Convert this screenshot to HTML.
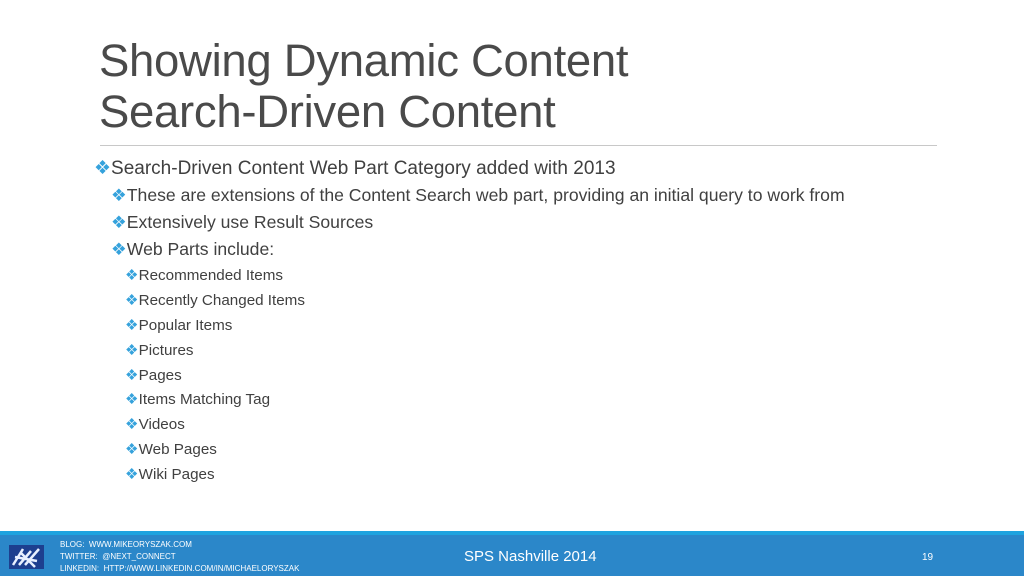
<!DOCTYPE html>
<html><head><style>
body{margin:0;width:1024px;height:576px;background:#fff;position:relative;overflow:hidden;font-family:"Liberation Sans",sans-serif;color:#404040}
.t{position:absolute;left:99px;top:35px;font-size:45.5px;line-height:51px;color:#4a4a4a;letter-spacing:-0.3px}
.rule{position:absolute;left:100px;top:145px;width:837px;height:1px;background:#c8c8c8}
.l{position:absolute;white-space:nowrap}
.b{color:#35a2dc}
.l1{left:94px;font-size:19px}
.l2{left:111px;font-size:17.6px}
.l3{left:125px;font-size:15.2px}
.ft{position:absolute;left:0;top:531px;width:1024px;height:45px;background:#2b87c9;border-top:4px solid #1fa3df;box-sizing:border-box}
.s{position:absolute;color:#fff;font-size:8px;left:60px;white-space:nowrap}
</style></head><body>
<div class="t">Showing Dynamic Content<br>Search-Driven Content</div>
<div class="rule"></div>
<div class="l l1" style="top:157px"><span class="b">❖</span>Search-Driven Content Web Part Category added with 2013</div>
<div class="l l2" style="top:185px"><span class="b">❖</span>These are extensions of the Content Search web part, providing an initial query to work from</div>
<div class="l l2" style="top:212px"><span class="b">❖</span>Extensively use Result Sources</div>
<div class="l l2" style="top:239px"><span class="b">❖</span>Web Parts include:</div>
<div class="l l3" style="top:266px"><span class="b">❖</span>Recommended Items</div>
<div class="l l3" style="top:291px"><span class="b">❖</span>Recently Changed Items</div>
<div class="l l3" style="top:316px"><span class="b">❖</span>Popular Items</div>
<div class="l l3" style="top:341px"><span class="b">❖</span>Pictures</div>
<div class="l l3" style="top:366px"><span class="b">❖</span>Pages</div>
<div class="l l3" style="top:390px"><span class="b">❖</span>Items Matching Tag</div>
<div class="l l3" style="top:415px"><span class="b">❖</span>Videos</div>
<div class="l l3" style="top:440px"><span class="b">❖</span>Web Pages</div>
<div class="l l3" style="top:465px"><span class="b">❖</span>Wiki Pages</div>
<div class="ft"></div>
<svg style="position:absolute;left:9px;top:545px" width="35" height="24" viewBox="0 0 35 24">
<rect width="35" height="24" fill="#1d3f8f"/>
<path d="M4 20 L14 4 M10 20 L22 6 M16 20 L30 4 M6 12 L28 16 M12 8 L26 22" stroke="#e8f0ff" stroke-width="2.5"/>
</svg>
<div class="s" style="top:540px">BLOG:&nbsp; WWW.MIKEORYSZAK.COM</div>
<div class="s" style="top:552px">TWITTER:&nbsp; @NEXT_CONNECT</div>
<div class="s" style="top:564px">LINKEDIN:&nbsp; HTTP://WWW.LINKEDIN.COM/IN/MICHAELORYSZAK</div>
<div class="l" style="left:464px;top:548px;color:#fff;font-size:15px">SPS Nashville 2014</div>
<div class="l" style="left:922px;top:552px;color:#fff;font-size:10px">19</div>
</body></html>
